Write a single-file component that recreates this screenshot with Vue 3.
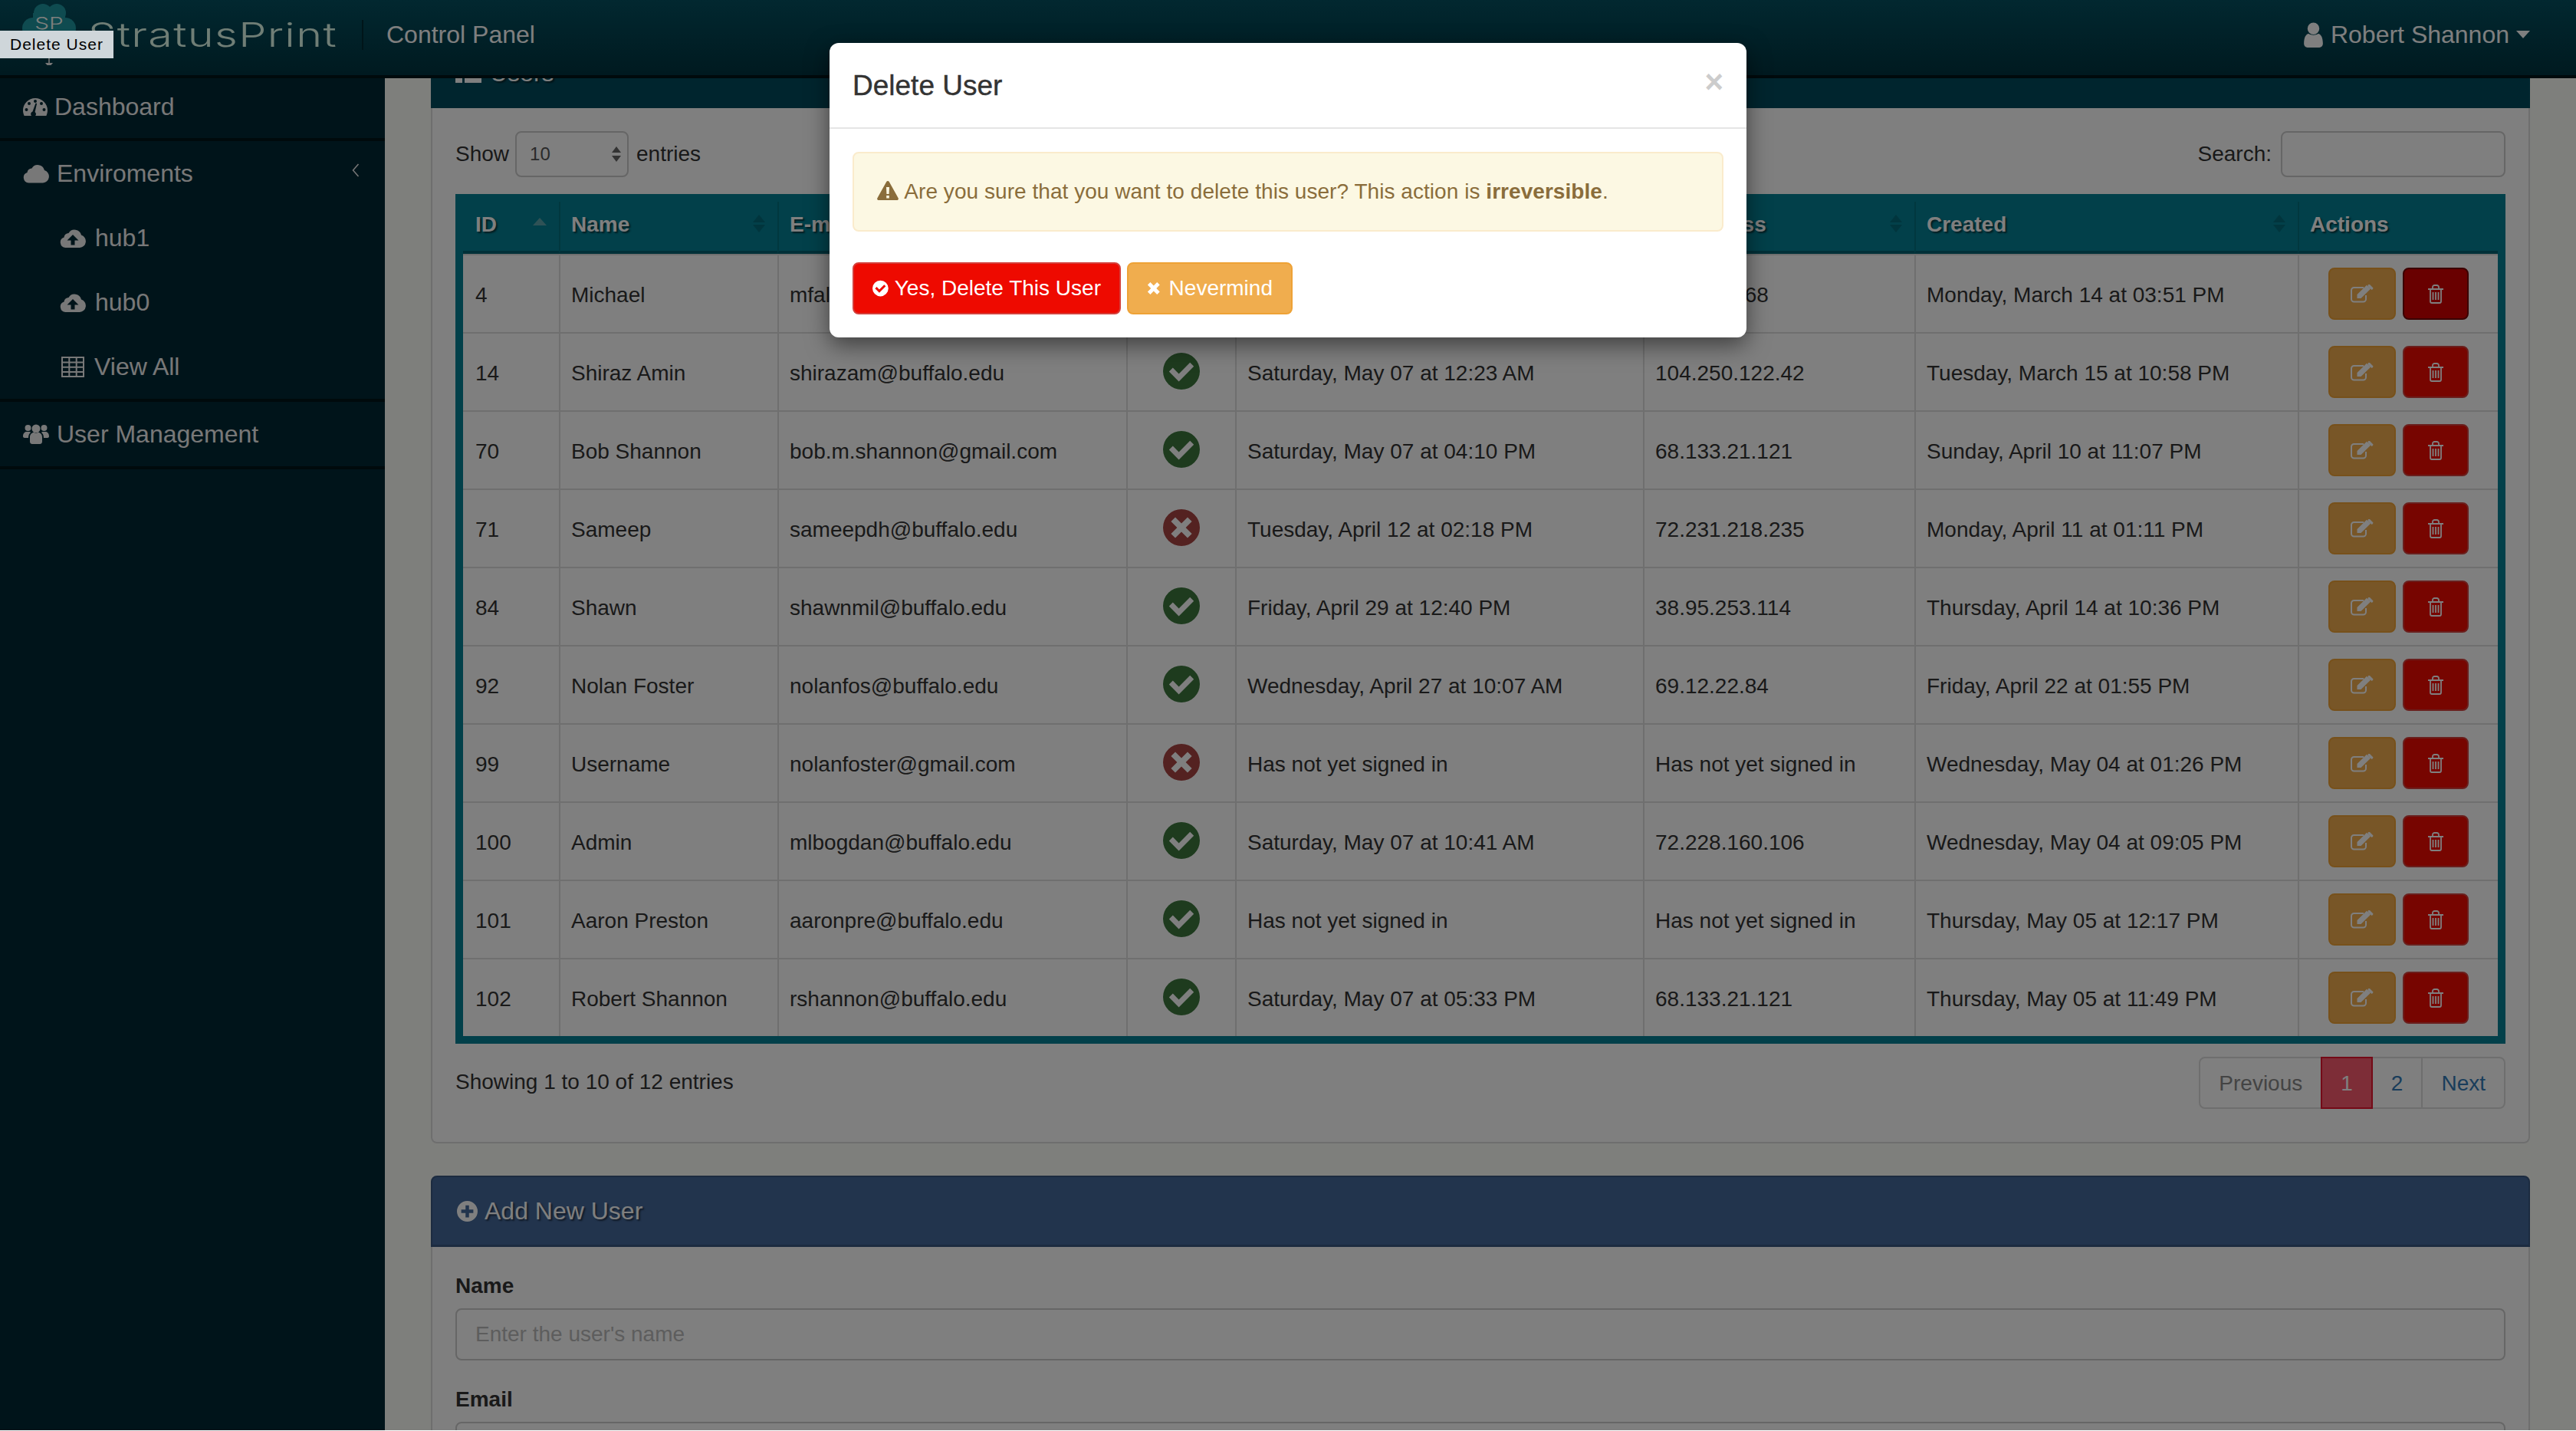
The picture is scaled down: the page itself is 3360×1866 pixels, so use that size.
<template>
  <div class="app">
    <header class="navbar">
      <svg class="logo" viewBox="0 0 70 80">
        <g class="logo-cloud">
          <circle cx="27" cy="12" r="12" />
          <circle cx="45" cy="12" r="12" />
          <circle cx="14" cy="32" r="14" />
          <circle cx="56" cy="32" r="14" />
          <rect x="14" y="12" width="42" height="36" />
        </g>
        <text class="logo-sp" x="35" y="33" text-anchor="middle">SP</text>
        <path class="logo-arrow" d="M34.200 71h1.600v8h-1.600z M30 77h10l-5 6z" />
      </svg>
      <span class="brand">StratusPrint</span>
      <span class="divider"></span>
      <span class="nav-title">Control Panel</span>
      <span class="nav-user">
        <Icon name="user" class="user-icon" />
        Robert Shannon
        <span class="nav-caret"></span>
      </span>
    </header>

    <div class="layout">
      <aside class="sidebar">
        <div class="side-group first">
          <a class="side-item"><Icon name="dashboard" class="side-icon dash-icon" />Dashboard</a>
        </div>
        <div class="side-group">
          <a class="side-item">
            <Icon name="cloud" class="side-icon" />Enviroments
            <Icon name="chevron" class="side-chevron" />
          </a>
          <a class="side-item sub"><Icon name="upload" class="sub-icon" />hub1</a>
          <a class="side-item sub"><Icon name="upload" class="sub-icon" />hub0</a>
          <a class="side-item sub"><Icon name="table" class="sub-icon table-icon" />View All</a>
        </div>
        <div class="side-group">
          <a class="side-item"><Icon name="users" class="side-icon" />User Management</a>
        </div>
      </aside>

      <main class="content">
        <section class="panel users-panel">
          <div class="panel-head teal">
            <Icon name="list" class="head-icon" />Users
          </div>
          <div class="panel-body">
            <div class="tools">
              <div class="tool-group">
                Show
                <div class="fake-select">
                  <span>10</span>
                  <span class="stepper"><i class="up"></i><i class="down"></i></span>
                </div>
                entries
              </div>
              <div class="tool-group search">
                Search:
                <div class="search-box"></div>
              </div>
            </div>

            <div class="table-wrap">
              <table>
                <colgroup>
                  <col v-for="c in columns" :key="c.label" :style="{ width: c.width + 'px' }" />
                </colgroup>
                <thead>
                  <tr>
                    <th v-for="c in columns" :key="c.label">
                      {{ c.label }}
                      <span v-if="c.sort === 'asc'" class="sort-asc"></span>
                      <span v-else-if="c.sort" class="sort-both"><i class="up"></i><i class="down"></i></span>
                    </th>
                  </tr>
                </thead>
                <tbody>
                  <tr v-for="(u, i) in users" :key="u.id">
                    <td>{{ u.id }}</td>
                    <td>{{ u.name }}</td>
                    <td>{{ u.email }}</td>
                    <td class="verified">
                      <Icon :name="u.ok ? 'check' : 'cross'" class="status" :class="u.ok ? 'ok' : 'bad'" />
                    </td>
                    <td>{{ u.last }}</td>
                    <td>{{ u.ip }}</td>
                    <td>{{ u.created }}</td>
                    <td class="actions">
                      <button class="act edit"><Icon name="edit" class="edit-icon" /></button>
                      <button class="act del" :class="{ hover: i === 0 }"><Icon name="trash" class="trash-icon" /></button>
                    </td>
                  </tr>
                </tbody>
              </table>
            </div>

            <div class="table-foot">
              <span>Showing 1 to 10 of 12 entries</span>
              <div class="pager">
                <a class="muted">Previous</a>
                <a class="active">1</a>
                <a>2</a>
                <a>Next</a>
              </div>
            </div>
          </div>
        </section>

        <section class="panel add-panel">
          <div class="panel-head navy">
            <Icon name="plus" class="plus-icon" />Add New User
          </div>
          <div class="panel-body form">
            <label>Name</label>
            <input type="text" placeholder="Enter the user's name" />
            <label>Email</label>
            <input type="text" />
          </div>
        </section>
      </main>
    </div>

    <div class="backdrop"></div>

    <div class="modal">
      <div class="modal-head">
        <h4>Delete User</h4>
        <span class="close">×</span>
      </div>
      <div class="modal-body">
        <div class="alert">
          <Icon name="warning" class="warn-icon" />
          Are you sure that you want to delete this user? This action is <b>irreversible</b>.
        </div>
        <div class="modal-buttons">
          <button class="btn red"><Icon name="check" class="btn-icon" /><span>Yes, Delete This User</span></button>
          <button class="btn orange"><Icon name="times" class="btn-x" /><span>Nevermind</span></button>
        </div>
      </div>
    </div>

    <div class="tooltip">Delete User</div>
  </div>
</template>

<script setup>
import { h } from "vue";

const cloud = "M7.500 25a7 7 0 0 1-2-13.600A6 6 0 0 1 11.500 6 9 9 0 0 1 28 8.600 8.400 8.400 0 0 1 26 25z";
const dot = (x, y, r) => `M${x} ${y - r}a${r} ${r} 0 1 0 0 ${r * 2} ${r} ${r} 0 1 0 0-${r * 2}z`;

const icons = {
  cloud: { vb: "0 0 34 25", fill: cloud },
  upload: { vb: "0 0 34 25", fill: cloud + " M17 8l7.500 7.500h-5v6h-5v-6h-5z" },
  dashboard: {
    vb: "0 0 32 24",
    fill:
      "M16 1A16 16 0 0 0 0 17c0 2.500.6 4.800 1.600 7h28.800c1-2.200 1.600-4.500 1.600-7A16 16 0 0 0 16 1z " +
      dot(16, 5, 2) + dot(8, 8, 2) + dot(24, 8, 2) + dot(4.500, 16, 2) + dot(27.500, 16, 2) +
      "M12.500 18.500l4-11 1.600.5-2.500 11a3.400 3.400 0 1 1-3.100-.5z",
  },
  table: { vb: "0 0 30 27", line: "M1 1h28v25H1z M1 7.500h28 M1 13.800h28 M1 20h28 M10.300 1v25 M19.700 1v25", sw: 2 },
  users: {
    vb: "0 0 34 26",
    fill:
      dot(17, 6, 5.500) + dot(6.500, 5, 4) + dot(27.500, 5, 4) +
      "M9 23v-6c0-3.500 2.500-6 5-6h6c2.500 0 5 2.500 5 6v6c0 1.800-1.500 3-3 3H12c-1.500 0-3-1.200-3-3z" +
      "M0 16c0-3.500 2-6 4.500-6h4c.5 0 1 .5 1.500 1-2 1.500-3 3.500-3 7H2c-1 0-2-.8-2-2z" +
      "M34 16c0-3.500-2-6-4.500-6h-4c-.5 0-1 .5-1.500 1 2 1.500 3 3.500 3 7h5c1 0 2-.8 2-2z",
  },
  user: {
    vb: "0 0 24 32",
    fill: dot(12, 8, 7.500) + "M0 27c0-8 2.500-12 6-12.500 3 2.200 9 2.200 12 0 3.500.5 6 4.500 6 12.500 0 3-2 5-4.500 5h-15C2 32 0 30 0 27z",
  },
  chevron: { vb: "0 0 10 18", line: "M8.500 1 1.500 9l7 8", sw: 1.500 },
  list: { vb: "0 0 34 28", fill: "M0 2h9v7H0z M0 11h9v7H0z M0 20h9v7H0z M12 2h22v7H12z M12 11h22v7H12z M12 20h22v7H12z" },
  check: {
    vb: "0 0 24 24",
    fill: "M12 0a12 12 0 1 0 0 24 12 12 0 0 0 0-24z M10.300 18.700l-6.400-6.400 2.500-2.500 3.900 3.900 7.300-7.300 2.500 2.500z",
  },
  cross: {
    vb: "0 0 24 24",
    fill: "M12 0a12 12 0 1 0 0 24 12 12 0 0 0 0-24z M8 5.200l4 4 4-4 2.800 2.800-4 4 4 4-2.800 2.800-4-4-4 4L5.200 16l4-4-4-4z",
  },
  times: { vb: "0 0 20 20", fill: "M5 1l5 5 5-5 4 4-5 5 5 5-4 4-5-5-5 5-4-4 5-5-5-5z" },
  warning: {
    vb: "0 0 28 25",
    fill: "M14 0c.8 0 1.500.4 1.900 1.200l11.700 21c.8 1.400-.2 2.800-1.700 2.800H2.100C.6 25-.4 23.600.4 22.200l11.700-21C12.500.4 13.200 0 14 0z M12 8l.4 9h3.200l.4-9z M12.200 19h3.600v3.400h-3.600z",
  },
  edit: {
    vb: "0 0 30 24",
    line: "M20 14v5a3.500 3.500 0 0 1-3.500 3.500h-12A3.500 3.500 0 0 1 1 19V7.500A3.500 3.500 0 0 1 4.500 4H17",
    fill: "M8.500 18v-5L21 .8l5 5L13.500 18z M23 0l1.500-.5 5 5-.5 1.500-1.500 1-5-5z",
    sw: 2,
  },
  trash: {
    vb: "0 0 22 25",
    line: "M1 6h20 M4 6v16a2 2 0 0 0 2 2h10a2 2 0 0 0 2-2V6 M7 6V3.500A2.500 2.500 0 0 1 9.500 1h3A2.500 2.500 0 0 1 15 3.500V6 M7.500 10v10 M11 10v10 M14.500 10v10",
    sw: 1.800,
  },
  plus: {
    vb: "0 0 24 24",
    fill: "M12 0a12 12 0 1 0 0 24 12 12 0 0 0 0-24z M10 5h4v5h5v4h-5v5h-4v-5H5v-4h5z",
  },
};

const Icon = (props) => {
  const icon = icons[props.name];
  const kids = [];
  if (icon.fill) kids.push(h("path", { d: icon.fill, fill: "currentColor", "fill-rule": "evenodd" }));
  if (icon.line) kids.push(h("path", { d: icon.line, fill: "none", stroke: "currentColor", "stroke-width": icon.sw }));
  return h("svg", { viewBox: icon.vb }, kids);
};
Icon.props = ["name"];

const columns = [
  { label: "ID", width: 125, sort: "asc" },
  { label: "Name", width: 285, sort: "both" },
  { label: "E-mail", width: 455, sort: "both" },
  { label: "Verified", width: 142, sort: "" },
  { label: "Last Sign In", width: 532, sort: "both" },
  { label: "IP Address", width: 354, sort: "both" },
  { label: "Created", width: 500, sort: "both" },
  { label: "Actions", width: 261, sort: "" },
];

const never = "Has not yet signed in";

const users = [
  { id: 4, name: "Michael", email: "mfalcone@buffalo.edu", ok: true, last: "Saturday, May 07 at 11:20 AM", ip: "68.133.2.68", created: "Monday, March 14 at 03:51 PM" },
  { id: 14, name: "Shiraz Amin", email: "shirazam@buffalo.edu", ok: true, last: "Saturday, May 07 at 12:23 AM", ip: "104.250.122.42", created: "Tuesday, March 15 at 10:58 PM" },
  { id: 70, name: "Bob Shannon", email: "bob.m.shannon@gmail.com", ok: true, last: "Saturday, May 07 at 04:10 PM", ip: "68.133.21.121", created: "Sunday, April 10 at 11:07 PM" },
  { id: 71, name: "Sameep", email: "sameepdh@buffalo.edu", ok: false, last: "Tuesday, April 12 at 02:18 PM", ip: "72.231.218.235", created: "Monday, April 11 at 01:11 PM" },
  { id: 84, name: "Shawn", email: "shawnmil@buffalo.edu", ok: true, last: "Friday, April 29 at 12:40 PM", ip: "38.95.253.114", created: "Thursday, April 14 at 10:36 PM" },
  { id: 92, name: "Nolan Foster", email: "nolanfos@buffalo.edu", ok: true, last: "Wednesday, April 27 at 10:07 AM", ip: "69.12.22.84", created: "Friday, April 22 at 01:55 PM" },
  { id: 99, name: "Username", email: "nolanfoster@gmail.com", ok: false, last: never, ip: never, created: "Wednesday, May 04 at 01:26 PM" },
  { id: 100, name: "Admin", email: "mlbogdan@buffalo.edu", ok: true, last: "Saturday, May 07 at 10:41 AM", ip: "72.228.160.106", created: "Wednesday, May 04 at 09:05 PM" },
  { id: 101, name: "Aaron Preston", email: "aaronpre@buffalo.edu", ok: true, last: never, ip: never, created: "Thursday, May 05 at 12:17 PM" },
  { id: 102, name: "Robert Shannon", email: "rshannon@buffalo.edu", ok: true, last: "Saturday, May 07 at 05:33 PM", ip: "68.133.21.121", created: "Thursday, May 05 at 11:49 PM" },
];
</script>

<style>
html,
body {
  margin: 0;
  background: #fff;
}
</style>

<style scoped>
.app {
  position: relative;
  width: 3360px;
  height: 1865px;
  overflow: hidden;
  font-family: "Liberation Sans", Arial, sans-serif;
  font-size: 28px;
  line-height: 40px;
  color: #333;
  background: #fcfff8;
}

/* top bar */
.navbar {
  display: flex;
  align-items: center;
  box-sizing: border-box;
  height: 102px;
  padding: 0 60px 8px 29px;
  background: linear-gradient(#045060, #003440);
  border-bottom: 4px solid #001419;
  color: #fff;
}

.logo {
  flex: none;
  align-self: flex-start;
  width: 70px;
  height: 80px;
  margin-top: 5px;
}

.logo-cloud {
  fill: #1e96a0;
}

.logo-sp {
  font-family: Inter, sans-serif;
  font-size: 22px;
  font-weight: 300;
  fill: #fafffa;
  transform-box: fill-box;
  transform-origin: center;
  transform: scaleX(1.35);
}

.logo-arrow {
  fill: #ededed;
}

.brand {
  display: inline-block;
  flex: none;
  width: 240px;
  margin-left: 16px;
  margin-right: 117px;
  font-family: Inter, sans-serif;
  font-size: 43px;
  font-weight: 300;
  letter-spacing: 1px;
  line-height: 50px;
  color: #e0fdec;
  transform: scaleX(1.34);
  transform-origin: left center;
}

.divider {
  flex: none;
  width: 2px;
  height: 39px;
  margin-right: 30px;
  background: #002a32;
}

.nav-title {
  font-size: 32px;
}

.nav-user {
  display: flex;
  align-items: center;
  margin-left: auto;
  font-size: 32px;
}

.user-icon {
  width: 25px;
  height: 33px;
  margin-right: 10px;
}

.nav-caret {
  width: 0;
  height: 0;
  margin-left: 9px;
  border-top: 10px solid #fff;
  border-left: 9px solid transparent;
  border-right: 9px solid transparent;
}

/* page body */
.layout {
  display: flex;
  height: 1763px;
}

.sidebar {
  flex: none;
  width: 502px;
  background: #002834;
  color: #f0f0f0;
  font-size: 32px;
}

.side-group {
  border-bottom: 4px solid #001419;
}

.side-item {
  display: flex;
  align-items: center;
  position: relative;
  box-sizing: border-box;
  height: 84px;
  padding-left: 30px;
}

.first .side-item {
  height: 78px;
  padding-bottom: 4px;
}

.side-item.sub {
  padding-left: 78px;
}

.side-icon {
  width: 34px;
  height: 26px;
  margin-right: 10px;
}

.dash-icon {
  width: 32px;
  height: 24px;
  margin-right: 9px;
}

.sub-icon {
  width: 34px;
  height: 25px;
  margin-right: 12px;
}

.table-icon {
  width: 30px;
  height: 27px;
  margin: 0 13px 0 2px;
}

.side-chevron {
  position: absolute;
  left: 459px;
  top: 29px;
  width: 10px;
  height: 18px;
}

.content {
  flex: 1;
  min-width: 0;
  overflow: hidden;
  padding: 0 60px;
}

.panel {
  background: #fff;
  border: 2px solid #ddd;
  border-top: none;
  border-radius: 8px;
}

.users-panel {
  margin-top: -54px;
}

.add-panel {
  margin-top: 42px;
}

.panel-head {
  display: flex;
  align-items: center;
  box-sizing: border-box;
  height: 93px;
  margin: 0 -2px;
  padding: 0 32px;
  border-radius: 8px 8px 0 0;
  font-size: 32px;
  color: #fff;
  text-shadow: 2px 2px 2px rgba(0, 0, 0, 0.5);
}

.teal {
  background: #004a5c;
}

.navy {
  background: #44689a;
  border: 2px solid #385680;
  border-bottom-width: 3px;
}

.head-icon {
  width: 34px;
  height: 28px;
  margin-right: 11px;
}

.plus-icon {
  width: 27px;
  height: 27px;
  margin-right: 9px;
}

.panel-body {
  padding: 30px 30px 43px;
}

.tools {
  display: flex;
  justify-content: space-between;
  height: 60px;
  margin-bottom: 22px;
}

.tool-group {
  display: flex;
  align-items: center;
  gap: 8px;
}

.fake-select {
  display: flex;
  align-items: center;
  justify-content: space-between;
  box-sizing: border-box;
  width: 148px;
  height: 60px;
  margin-right: 2px;
  padding: 0 8px 0 17px;
  background: #fff;
  border: 2px solid #ccc;
  border-radius: 8px;
  font-size: 24px;
  color: #555;
}

.stepper {
  display: flex;
  flex-direction: column;
  gap: 4px;
}

.stepper i,
.sort-both i {
  display: block;
  width: 0;
  height: 0;
  border-left: 6px solid transparent;
  border-right: 6px solid transparent;
}

.stepper .up {
  border-bottom: 8px solid #666;
}

.stepper .down {
  border-top: 8px solid #666;
}

.search {
  gap: 12px;
}

.search-box {
  box-sizing: border-box;
  width: 293px;
  height: 60px;
  background: #fff;
  border: 2px solid #ccc;
  border-radius: 8px;
}

.table-wrap {
  border: 10px solid #048094;
}

table {
  width: 2654px;
  table-layout: fixed;
  border-spacing: 0;
  border-collapse: separate;
}

th {
  position: relative;
  box-sizing: border-box;
  height: 68px;
  padding: 0 14px 5px;
  border-left: 2px solid #03707f;
  border-bottom: 4px solid #006070;
  background: #048094;
  color: #fff;
  font-weight: bold;
  text-align: left;
  white-space: nowrap;
  text-shadow: 2px 2px 2px rgba(0, 0, 0, 0.55);
}

th:first-child,
td:first-child {
  padding-left: 16px;
  border-left: none;
}

.sort-asc {
  position: absolute;
  right: 16px;
  top: 21px;
  width: 0;
  height: 0;
  border-bottom: 10px solid #5fa5ad;
  border-left: 9px solid transparent;
  border-right: 9px solid transparent;
}

.sort-both {
  position: absolute;
  right: 16px;
  top: 17px;
  display: flex;
  flex-direction: column;
  gap: 3px;
}

.sort-both i {
  border-left-width: 8px;
  border-right-width: 8px;
}

.sort-both .up {
  border-bottom: 10px solid #036a7a;
}

.sort-both .down {
  border-top: 10px solid #036a7a;
}

td {
  box-sizing: border-box;
  height: 102px;
  padding: 3px 14px 0;
  border-top: 2px solid #dedede;
  border-left: 2px solid #dedede;
  white-space: nowrap;
}

.verified {
  padding: 0;
  text-align: center;
}

.status {
  display: block;
  width: 48px;
  height: 48px;
  margin: -3px auto 0;
}

.ok {
  color: #3c763d;
}

.bad {
  color: #a94442;
}

.actions {
  padding: 0;
  text-align: center;
}

.act {
  display: inline-flex;
  align-items: center;
  justify-content: center;
  box-sizing: border-box;
  height: 68px;
  padding: 0;
  border-radius: 8px;
  border: 2px solid;
  color: #fff;
  vertical-align: middle;
}

.edit {
  width: 88px;
  margin-right: 9px;
  background: #f0ad4e;
  border-color: #eea236;
}

.del {
  width: 86px;
  background: #ee0a00;
  border-color: #d43f3a;
}

.del.hover {
  background: #d20000;
  border-color: #760000;
}

.edit-icon {
  width: 30px;
  height: 24px;
}

.trash-icon {
  width: 22px;
  height: 25px;
}

.table-foot {
  display: flex;
  align-items: flex-start;
  justify-content: space-between;
  padding-top: 17px;
}

.table-foot > span {
  padding-top: 13px;
}

.pager {
  display: flex;
  height: 68px;
}

.pager a {
  box-sizing: border-box;
  height: 68px;
  margin-left: -2px;
  padding: 13px 24px;
  background: #fff;
  border: 2px solid #ddd;
  color: #337ab7;
}

.pager a:first-child {
  margin-left: 0;
  border-radius: 8px 0 0 8px;
}

.pager a:last-child {
  border-radius: 0 8px 8px 0;
}

.pager .muted {
  color: #888;
}

.pager .active {
  position: relative;
  background: #fa5a6e;
  border-color: #e8142e;
  color: #fff;
}

.form {
  padding-bottom: 30px;
}

.form label {
  display: block;
  margin-bottom: 9px;
  padding-top: 1px;
  font-weight: bold;
}

.form input {
  display: block;
  box-sizing: border-box;
  width: 100%;
  height: 68px;
  margin-bottom: 30px;
  padding: 0 24px;
  background: #fff;
  border: 2px solid #ccc;
  border-radius: 8px;
  font: inherit;
  outline: none;
}

.form input::placeholder {
  color: #bbb;
}

/* overlay */
.backdrop {
  position: absolute;
  inset: 0;
  background: rgba(0, 0, 0, 0.5);
}

.modal {
  position: absolute;
  left: 1082px;
  top: 56px;
  width: 1196px;
  background: #fff;
  border-radius: 12px;
  box-shadow: 0 10px 30px rgba(0, 0, 0, 0.5);
}

.modal-head {
  display: flex;
  justify-content: space-between;
  box-sizing: border-box;
  height: 112px;
  padding: 30px;
  border-bottom: 2px solid #e5e5e5;
}

.modal-head h4 {
  margin: 0;
  font-size: 37px;
  font-weight: 500;
  line-height: 52px;
  -webkit-text-stroke: 0.4px #333;
}

.close {
  font-size: 42px;
  font-weight: bold;
  line-height: 42px;
  color: #ccc;
}

.modal-body {
  padding: 30px;
}

.alert {
  box-sizing: border-box;
  height: 104px;
  margin-bottom: 40px;
  padding: 30px;
  background: #fcf8e3;
  border: 2px solid #faebcc;
  border-radius: 8px;
  color: #8a6d3b;
  letter-spacing: 0.05px;
}

.warn-icon {
  width: 28px;
  height: 25px;
  margin-right: 1px;
  vertical-align: -2px;
}

.modal-buttons {
  display: flex;
  gap: 8px;
}

.btn {
  display: flex;
  align-items: center;
  box-sizing: border-box;
  height: 68px;
  padding: 0 24px;
  border: 2px solid;
  border-radius: 8px;
  font: inherit;
  color: #fff;
  white-space: nowrap;
}

.red {
  width: 350px;
  background: #ee0a00;
  border-color: #d43f3a;
}

.orange {
  width: 216px;
  background: #f0ad4e;
  border-color: #eea236;
}

.btn-icon {
  width: 24px;
  height: 24px;
  margin-right: 8px;
}

.btn-x {
  width: 18px;
  height: 18px;
  margin-right: 11px;
}

.tooltip {
  position: absolute;
  left: 0;
  top: 40px;
  width: 148px;
  height: 36px;
  padding-left: 13px;
  box-sizing: border-box;
  background: #cfd6da;
  color: #000;
  font-size: 21px;
  letter-spacing: 1px;
  line-height: 36px;
  white-space: nowrap;
}
</style>
